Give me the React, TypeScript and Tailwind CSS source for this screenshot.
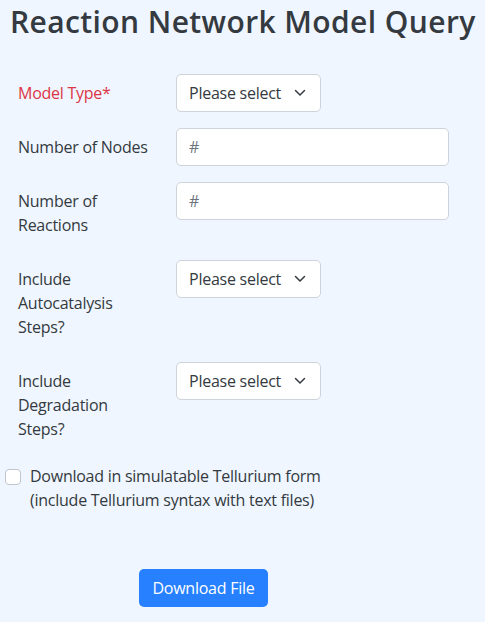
import { useState } from 'react';

const font = { fontFamily: '"Open Sans", "Noto Sans", sans-serif' };

const Chevron = () => (
  <svg width="12" height="8" viewBox="0 0 12 8" className="shrink-0">
    <path d="M1.5 1.5L6 6l4.5-4.5" fill="none" stroke="#343a40" strokeWidth="1.5" strokeLinecap="round" strokeLinejoin="round" />
  </svg>
);

const SelectBox = () => (
  <button
    type="button"
    className="flex h-[38px] w-[145px] items-center justify-between rounded-[5px] border border-[#ced4da] bg-white pl-3 pr-[14px] text-[16px] tracking-[-0.25px] text-[#343a40]"
  >
    <span>Please select</span>
    <Chevron />
  </button>
);

const NumberInput = () => (
  <input
    type="text"
    placeholder="#"
    className="h-[38px] w-[273px] rounded-[5px] border border-[#ced4da] bg-white px-3 text-[16px] text-[#343a40] outline-none placeholder:text-[#6c757d]"
  />
);

type RowProps = {
  label: string;
  required?: boolean;
  children: React.ReactNode;
};

const Row = ({ label, required, children }: RowProps) => (
  <div className="mb-4 flex items-start">
    <label
      className={
        'w-[176px] shrink-0 py-[7px] pl-[18px] pr-[25px] text-[16px] leading-6 tracking-[-0.25px] ' +
        (required ? 'text-[#dc3545]' : 'text-[#343a40]')
      }
    >
      {label}
    </label>
    {children}
  </div>
);

export default function App() {
  const [tellurium, setTellurium] = useState(false);

  return (
    <div className="min-h-[622px] w-full bg-[#eff6ff]" style={font}>
      <h1 className="pl-[10px] pt-[4px] text-[30px] font-semibold leading-[36px] tracking-[0.4px] text-[#343a40]">
        Reaction Network Model Query
      </h1>

      <form className="pt-[34px]">
        <Row label="Model Type*" required>
          <SelectBox />
        </Row>
        <Row label="Number of Nodes">
          <NumberInput />
        </Row>
        <Row label="Number of Reactions">
          <NumberInput />
        </Row>
        <Row label="Include Autocatalysis Steps?">
          <SelectBox />
        </Row>
        <Row label="Include Degradation Steps?">
          <SelectBox />
        </Row>

        <label className="flex items-start pl-[5px] text-[16px] leading-6 tracking-[-0.25px] text-[#343a40]">
          <input
            type="checkbox"
            checked={tellurium}
            onChange={(e) => setTellurium(e.target.checked)}
            className="mt-[5px] h-4 w-4 shrink-0 appearance-none rounded-[4px] border border-[#bfc5cc] bg-white"
          />
          <span className="pl-[9px]">
            Download in simulatable Tellurium form
            <br />
            (include Tellurium syntax with text files)
          </span>
        </label>

        <div className="pl-[139px] pt-[57px]">
          <button
            type="button"
            className="h-[38px] w-[129px] rounded-[5px] bg-[#2680ff] text-[16px] tracking-[-0.25px] text-white"
          >
            Download File
          </button>
        </div>
      </form>
    </div>
  );
}
